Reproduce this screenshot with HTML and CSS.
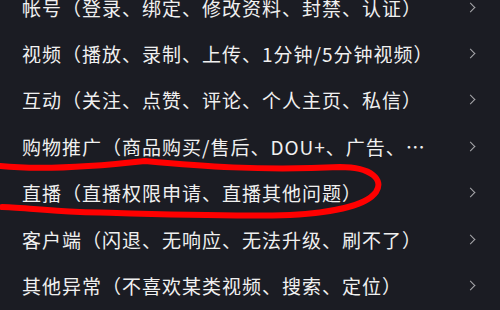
FILE: index.html
```html
<!DOCTYPE html>
<html lang="zh-CN">
<head>
<meta charset="utf-8">
<link rel="stylesheet" href="styles.css">
</head>
<body>
<div class="screen">
  <ul class="menu">
    <li class="row"><span class="label">帐号（登录、绑定、修改资料、封禁、认证）</span><span class="chev"></span></li>
    <li class="row"><span class="label">视频（播放、录制、上传、1分钟/5分钟视频）</span><span class="chev"></span></li>
    <li class="row"><span class="label">互动（关注、点赞、评论、个人主页、私信）</span><span class="chev"></span></li>
    <li class="row"><span class="label">购物推广（商品购买/售后、DOU+、广告、…</span><span class="chev"></span></li>
    <li class="row"><span class="label">直播（直播权限申请、直播其他问题）</span><span class="chev"></span></li>
    <li class="row"><span class="label">客户端（闪退、无响应、无法升级、刷不了）</span><span class="chev"></span></li>
    <li class="row"><span class="label">其他异常（不喜欢某类视频、搜索、定位）</span><span class="chev"></span></li>
  </ul>
  <svg class="mark" width="500" height="310" viewBox="0 0 500 310">
    <path d="M0,166 C40,170 100,166 145,161 C200,166 260,171 340,167 C372,167 384,180 376,192 C366,206 330,213 290,215 C230,217 150,214 80,212 C40,210 15,207 2,207" fill="none" stroke="#f00" stroke-width="6" stroke-linecap="round" stroke-linejoin="round"/>
  </svg>
</div>
</body>
</html>
```

FILE: styles.css
```css
html, body {
  margin: 0;
  padding: 0;
  background: #1b1c23;
}
.screen {
  position: relative;
  width: 500px;
  height: 310px;
  overflow: hidden;
  background: #1b1c23;
}
.menu {
  list-style: none;
  margin: -16px 0 0 0;
  padding: 0;
}
.row {
  height: 46.4px;
  display: flex;
  align-items: center;
  justify-content: space-between;
  padding: 0 23px 0 22px;
}
.label {
  font-family: "Noto Sans CJK SC", "Noto Sans", sans-serif;
  font-size: 19px;
  letter-spacing: 1px;
  color: #f0f0f0;
  white-space: nowrap;
}
.chev {
  width: 6px;
  height: 6px;
  border-top: 1.5px solid #a8a8ac;
  border-right: 1.5px solid #a8a8ac;
  transform: rotate(45deg);
  margin-right: 3px;
}
.mark {
  position: absolute;
  left: 0;
  top: 0;
  pointer-events: none;
}
```
